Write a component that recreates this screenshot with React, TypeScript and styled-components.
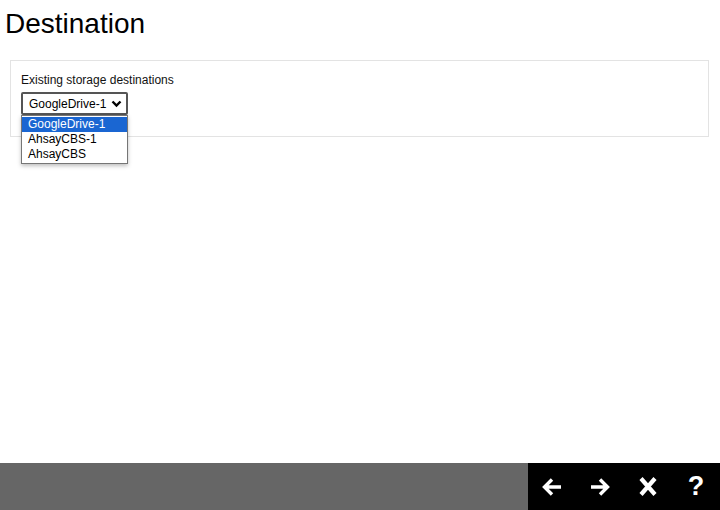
import styled, { createGlobalStyle } from 'styled-components';

const GlobalStyle = createGlobalStyle`
	html, body, #root {
		height: 100%;
		margin: 0;
	}
	body {
		font-family: 'Liberation Sans', Arial, sans-serif;
		background: #fff;
		color: #000;
	}
`;

const Page = styled.div`
	display: flex;
	flex-direction: column;
	height: 100%;
`;

const Content = styled.main`
	flex: 1;
	padding: 8px 11px 0 10px;
`;

const Title = styled.h1`
	margin: 0 0 20px -5px;
	font-size: 28px;
	font-weight: normal;
	line-height: 32px;
`;

const Panel = styled.section`
	border: 1px solid #e3e3e3;
	padding: 12px 10px 21px;
`;

const Label = styled.div`
	font-size: 12px;
	line-height: 14px;
	margin-bottom: 5px;
	color: #111;
`;

const SelectWrap = styled.div`
	position: relative;
	width: 107px;
`;

const SelectBox = styled.div`
	box-sizing: border-box;
	height: 23px;
	border: 2px solid #555;
	border-radius: 2px;
	display: flex;
	align-items: center;
	justify-content: space-between;
	padding: 0 4px 0 6px;
	font-size: 12px;
	background: #fff;
`;

const OptionList = styled.ul`
	position: absolute;
	top: 23px;
	left: 0;
	width: 107px;
	box-sizing: border-box;
	margin: 0;
	padding: 1px 0;
	list-style: none;
	border: 1px solid #767676;
	background: #fff;
	box-shadow: 0 2px 4px rgba(0, 0, 0, 0.25);
	z-index: 2;
`;

const Option = styled.li<{ $selected?: boolean }>`
	font-size: 12px;
	line-height: 15px;
	height: 15px;
	padding: 0 6px;
	background: ${(p) => (p.$selected ? '#1a66d2' : 'transparent')};
	color: ${(p) => (p.$selected ? '#fff' : '#000')};
`;

const Footer = styled.footer`
	height: 47px;
	background: #666;
	display: flex;
	justify-content: flex-end;
`;

const ButtonBar = styled.nav`
	display: flex;
	background: #000;
`;

const NavButton = styled.button`
	width: 48px;
	height: 47px;
	border: none;
	background: transparent;
	color: #fff;
	display: flex;
	align-items: center;
	justify-content: center;
	padding: 0;
	cursor: pointer;
	font-family: 'Liberation Sans', Arial, sans-serif;
	font-weight: bold;
	font-size: 27px;
`;

const Chevron = () => (
	<svg width="11" height="8" viewBox="0 0 11 8">
		<path d="M1.5 1.5 L5.5 5.5 L9.5 1.5" fill="none" stroke="#000" strokeWidth="2.4" />
	</svg>
);

const ArrowLeft = () => (
	<svg width="22" height="20" viewBox="0 0 22 20">
		<path d="M20 10 H4 M11 2.5 L3.5 10 L11 17.5" fill="none" stroke="#fff" strokeWidth="3.4" />
	</svg>
);

const ArrowRight = () => (
	<svg width="22" height="20" viewBox="0 0 22 20">
		<path d="M2 10 H18 M11 2.5 L18.5 10 L11 17.5" fill="none" stroke="#fff" strokeWidth="3.4" />
	</svg>
);

const CloseIcon = () => (
	<svg width="20" height="19" viewBox="0 0 20 19">
		<path d="M3 1.5 L17 17.5 M17 1.5 L3 17.5" fill="none" stroke="#fff" strokeWidth="4.2" />
	</svg>
);

const destinations = ['GoogleDrive-1', 'AhsayCBS-1', 'AhsayCBS'];

const App: React.FC = (): React.ReactElement => {
	return (
		<>
			<GlobalStyle />
			<Page>
				<Content>
					<Title>Destination</Title>
					<Panel>
						<Label>Existing storage destinations</Label>
						<SelectWrap>
							<SelectBox>
								<span>GoogleDrive-1</span>
								<Chevron />
							</SelectBox>
							<OptionList>
								{destinations.map((d, i) => (
									<Option key={d} $selected={i === 0}>
										{d}
									</Option>
								))}
							</OptionList>
						</SelectWrap>
					</Panel>
				</Content>
				<Footer>
					<ButtonBar>
						<NavButton aria-label="Back">
							<ArrowLeft />
						</NavButton>
						<NavButton aria-label="Next">
							<ArrowRight />
						</NavButton>
						<NavButton aria-label="Close">
							<CloseIcon />
						</NavButton>
						<NavButton aria-label="Help">?</NavButton>
					</ButtonBar>
				</Footer>
			</Page>
		</>
	);
};

export default App;
